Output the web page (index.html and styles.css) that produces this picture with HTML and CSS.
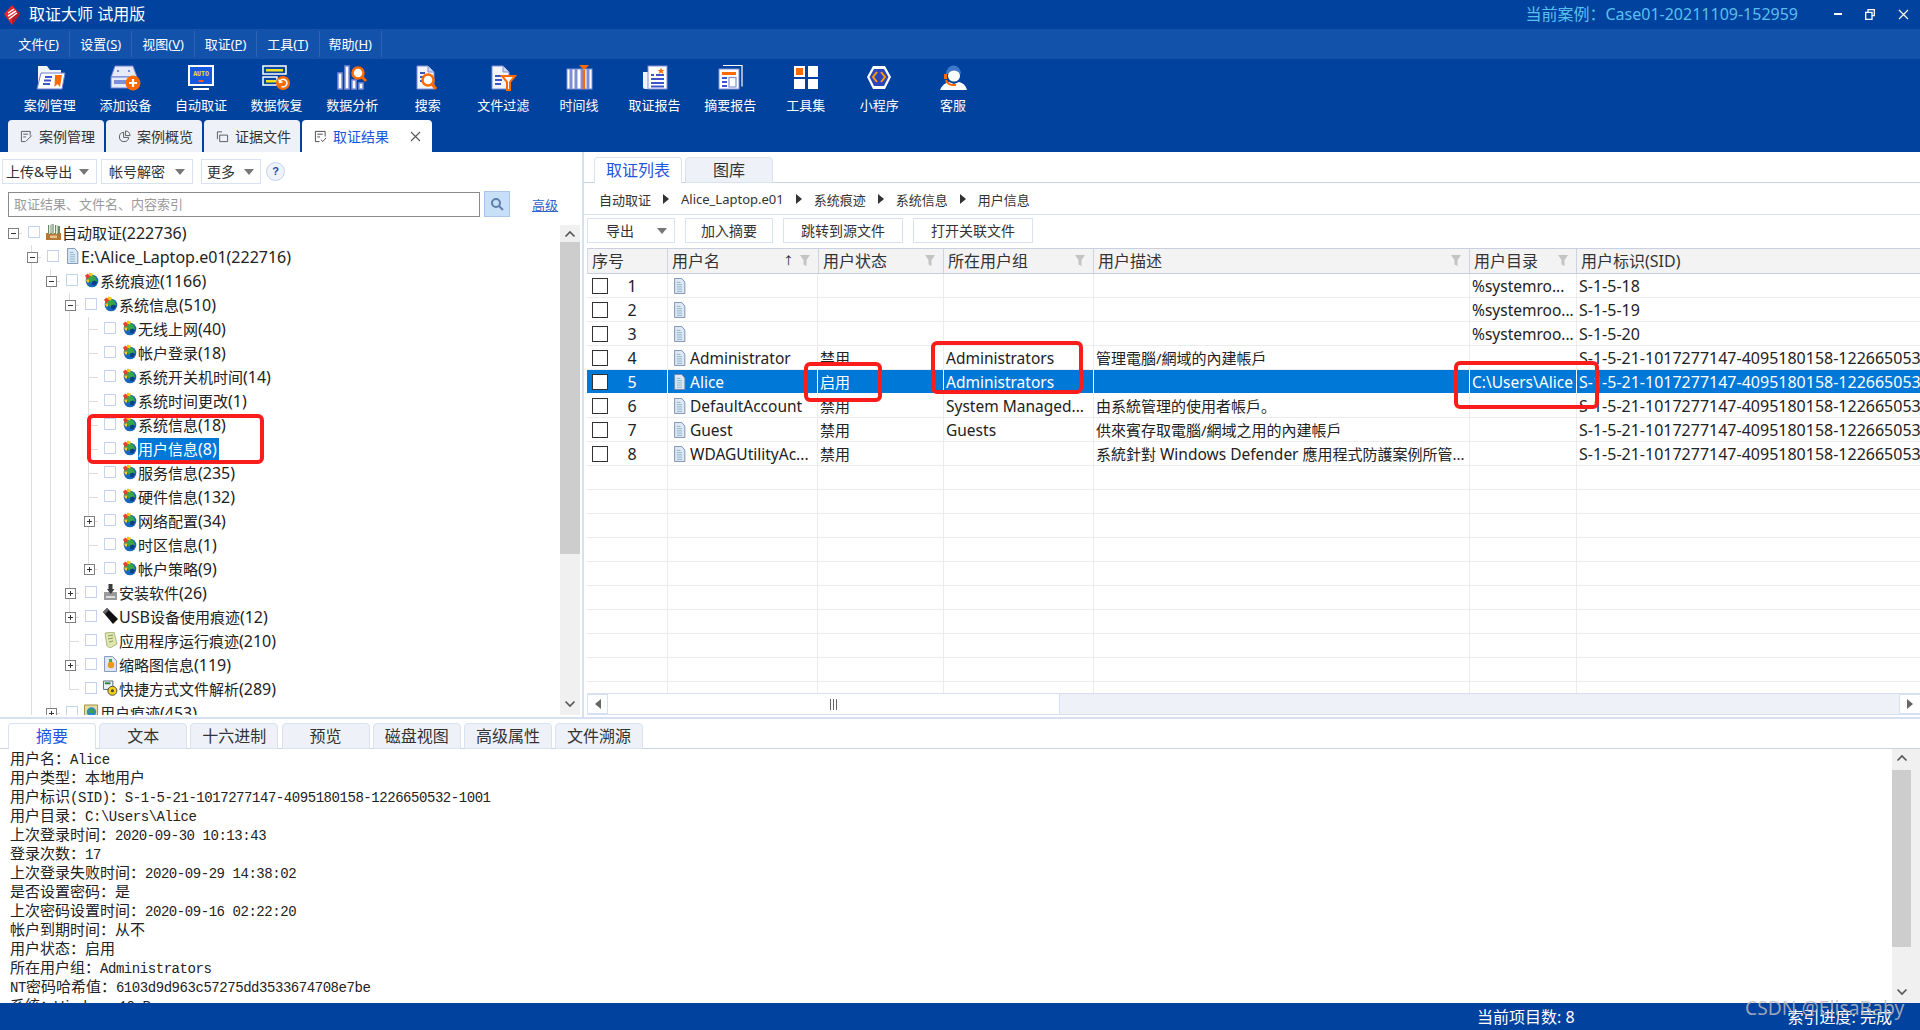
FILE: index.html
```html
<!DOCTYPE html>
<html lang="zh-CN">
<head>
<meta charset="utf-8">
<title>取证大师 试用版</title>
<link rel="stylesheet" href="styles.css">
</head>
<body>
<svg class="defs" aria-hidden="true">
  <symbol id="g-globe" viewBox="0 0 15 15">
    <circle cx="8" cy="8.500" r="6.300" fill="#1668bd"/>
    <path d="M3 5l3-3 5 2 2 4-3 3-3-1-3-2z" fill="#37a548"/>
    <path d="M8 9l3-1 2 2-2 3-3-1z" fill="#0d3f86"/>
    <path d="M1 3l3-2 2 3-3 3z" fill="#e8402a"/>
    <path d="M5 0l4 1-1 3-3-1z" fill="#f6c81e"/>
    <path d="M2 7l3 0 0 3-2 0z" fill="#f6c81e"/>
  </symbol>
  <symbol id="g-box" viewBox="0 0 15 16">
    <path d="M0 9h15v7H0z" fill="#b5763a"/>
    <path d="M2 1h2.500v9H2zM5.500 0H8v10H5.500zM9 1h2.500v9H9zM12 2h2v8h-2z" fill="#6a8a66"/>
    <path d="M3 1h1v9H3zM6.500 0h1v10h-1zM10 1h1v9h-1z" fill="#dfe8d8"/>
    <path d="M4 11.500h7V14H4z" fill="#e9c48a"/>
  </symbol>
  <symbol id="g-doc" viewBox="0 0 14 18">
    <path d="M1.500.5h8l3.500 4v13h-11.500z" fill="#dfe9f5" stroke="#6d88a8"/>
    <path d="M4 5h4M4 7.500h6M4 10h6M4 12.500h6M4 15h6" stroke="#7fb0c8"/>
  </symbol>
  <symbol id="g-inst" viewBox="0 0 15 16">
    <path d="M1 8h13v8H1z" fill="#9a9a9a"/>
    <path d="M5.500 0h4v5h2l-3.800 5L4 5h1.500z" fill="#3a3a3a"/>
    <path d="M3 12h9v2H3z" fill="#ddd"/>
  </symbol>
  <symbol id="g-usb" viewBox="0 0 15 16">
    <path d="M0 4l4-4 11 11-5 5z" fill="#111"/>
    <path d="M0 4l4-4 2 2-4 4z" fill="#666"/>
  </symbol>
  <symbol id="g-app" viewBox="0 0 15 16">
    <path d="M2 1l9-1 3 12-7 4-3-2z" fill="#dfe6b0" stroke="#9aa86a" stroke-width=".8"/>
    <path d="M5 4l5-1M5 7l5-1M6 10l4-1" stroke="#8a9a5a"/>
  </symbol>
  <symbol id="g-thumb" viewBox="0 0 15 16">
    <path d="M1.500.5h8l4 4v11h-12z" fill="#dfe6f6" stroke="#8b9bc0"/>
    <circle cx="8" cy="9" r="3.300" fill="#e89a1e"/>
    <path d="M6 3h3v3H6z" fill="#4aa84a"/>
  </symbol>
  <symbol id="g-link" viewBox="0 0 16 16">
    <path d="M.5.500h10v9H.5z" fill="#e8f0f8" stroke="#567"/>
    <path d="M2 3h6" stroke="#2a7a3a" stroke-width="2"/>
    <circle cx="10" cy="11" r="4.800" fill="#f2d21a" stroke="#444"/>
    <circle cx="10" cy="11" r="1.600" fill="#444"/>
  </symbol>
  <symbol id="g-user" viewBox="0 0 16 16">
    <path d="M.5.500h14v15H.5z" fill="#e8d9a0" stroke="#a08a40"/>
    <circle cx="8" cy="8" r="5" fill="#2a8ac8"/>
    <path d="M5 6l3-2 3 2v3H5z" fill="#3aa050"/>
  </symbol>
  <symbol id="g-funnel" viewBox="0 0 10 12">
    <path d="M0 0h10L6.500 5v6l-3-1.500V5z" fill="#c4c4c4"/>
  </symbol>
  <symbol id="g-mag" viewBox="0 0 14 14">
    <circle cx="6" cy="6" r="4" fill="none" stroke="#5d7fa8" stroke-width="2"/>
    <path d="M9 9l4 4" stroke="#5d7fa8" stroke-width="2"/>
  </symbol>
</svg>

<div class="app">
  <header class="head">
    <div class="titlebar">
      <svg class="logo" viewBox="0 0 16 20" width="16" height="20">
        <path d="M8 0l8 9-8 11L0 9z" fill="#e5262a"/>
        <path d="M8 20l8-11-3-3-5 7z" fill="#b81a20"/>
        <path d="M4 8l6-4M4 11l8-5M5 14l8-6" stroke="#fff" stroke-width="1.500" fill="none"/>
      </svg>
      <span class="apptitle">取证大师 试用版</span>
      <span class="case">当前案例：Case01-20211109-152959</span>
      <div class="winctl">
        <svg width="8" height="3" viewBox="0 0 8 3"><path d="M0 1h8" stroke="#fff" stroke-width="2"/></svg>
        <svg width="10" height="11" viewBox="0 0 10 11"><path d="M3 3V.7h6.300v6H7M.7 3.300h6.300v7H.7z" fill="none" stroke="#fff" stroke-width="1.300"/></svg>
        <svg width="11" height="11" viewBox="0 0 11 11"><path d="M1 1l9 9M10 1l-9 9" stroke="#fff" stroke-width="1.200"/></svg>
      </div>
    </div>
    <nav class="menubar">
      <span class="mi">文件(<u>F</u>)</span>
      <span class="mi">设置(<u>S</u>)</span>
      <span class="mi">视图(<u>V</u>)</span>
      <span class="mi">取证(<u>P</u>)</span>
      <span class="mi">工具(<u>T</u>)</span>
      <span class="mi">帮助(<u>H</u>)</span>
    </nav>
    <div class="toolbar">
      <div class="tool">
        <svg class="ticon" viewBox="0 0 32 26"><path d="M4 1h9l3 4h11v18H4z" fill="#f2f4fb"/><path d="M7 8h24l-3 16H3z" fill="#fff" stroke="#6f7fd0"/><path d="M11 12h7M10 15.500h7M9 19h7" stroke="#3d55c8" stroke-width="2"/><path d="M21 10h7l-2 12-2.500-3-3 3z" fill="#ff6a00"/></svg>
        <span class="tlabel">案例管理</span>
      </div>
      <div class="tool">
        <svg class="ticon" viewBox="0 0 32 26"><path d="M6 1h18l4 11H2z" fill="#e7eaf8" stroke="#6f7fd0"/><circle cx="9" cy="6" r="1" fill="#5a6bc8"/><circle cx="20" cy="6" r="1" fill="#5a6bc8"/><rect x="2" y="12" width="25" height="11" fill="#e7eaf8" stroke="#6f7fd0"/><rect x="5" y="15" width="13" height="4" fill="#7f8fd6"/><circle cx="24" cy="18" r="7.500" fill="#ff6a00"/><path d="M24 14v8M20 18h8" stroke="#fff" stroke-width="2.200"/></svg>
        <span class="tlabel">添加设备</span>
      </div>
      <div class="tool">
        <svg class="ticon" viewBox="0 0 32 26"><rect x="3" y="0" width="26" height="21" fill="#fff"/><rect x="5" y="2" width="22" height="17" fill="#1658e0"/><text class="autotxt" x="16" y="11" text-anchor="middle">AUTO</text><rect x="13.500" y="15" width="5" height="2" fill="#ff5a1a"/><path d="M8 24h16" stroke="#fff" stroke-width="2"/></svg>
        <span class="tlabel">自动取证</span>
      </div>
      <div class="tool">
        <svg class="ticon" viewBox="0 0 32 26"><rect x="2" y="1" width="23" height="8" fill="#0a46a5" stroke="#fff" stroke-width="1.500"/><rect x="5" y="4" width="17" height="2.500" fill="#f4e020"/><rect x="2" y="12" width="14" height="8" fill="#0a46a5" stroke="#fff" stroke-width="1.500"/><rect x="5" y="15" width="10" height="2.500" fill="#f4e020"/><circle cx="22" cy="18" r="7" fill="#ff6a00"/><path d="M18.500 17a3.800 3.800 0 1 1 2 4.500M18 14.500l.5 3 3-.8" fill="none" stroke="#fff" stroke-width="1.500"/></svg>
        <span class="tlabel">数据恢复</span>
      </div>
      <div class="tool">
        <svg class="ticon" viewBox="0 0 32 26"><g fill="#fff" stroke="#7f8fd6" stroke-width="1.500"><rect x="2" y="8" width="4" height="16"/><rect x="9" y="1" width="4" height="23"/><rect x="16" y="15" width="4" height="9"/><rect x="23" y="18" width="4" height="6"/></g><circle cx="22" cy="8" r="5.500" fill="#fff" stroke="#ff6a00" stroke-width="2.500"/><path d="M26 12l4 4" stroke="#ff6a00" stroke-width="3"/></svg>
        <span class="tlabel">数据分析</span>
      </div>
      <div class="tool">
        <svg class="ticon" viewBox="0 0 32 26"><path d="M5 1h11l6 6v17H5z" fill="#f4f5fb" stroke="#7f8fd6"/><path d="M16 1v6h6" fill="#cfd5ee" stroke="#7f8fd6"/><path d="M8 8h5M8 12h3M8 16h3" stroke="#3d55c8" stroke-width="2"/><circle cx="16" cy="15" r="5.500" fill="#fff" stroke="#ff6a00" stroke-width="2.500"/><path d="M20 19l4 5" stroke="#ff6a00" stroke-width="3"/></svg>
        <span class="tlabel">搜索</span>
      </div>
      <div class="tool">
        <svg class="ticon" viewBox="0 0 32 26"><path d="M5 1h11l6 6v17H5z" fill="#f4f5fb" stroke="#7f8fd6"/><path d="M16 1v6h6" fill="#cfd5ee" stroke="#7f8fd6"/><path d="M8 11h6M8 15h7M8 19h6" stroke="#3d55c8" stroke-width="2"/><path d="M15 11h13l-5 6v8h-3v-8z" fill="#fff" stroke="#ff6a00" stroke-width="2"/></svg>
        <span class="tlabel">文件过滤</span>
      </div>
      <div class="tool">
        <svg class="ticon" viewBox="0 0 32 26"><rect x="4" y="4" width="25" height="20" fill="#fff" stroke="#7f8fd6"/><path d="M8 4v20M13 4v20M19 4v20M25 4v20" stroke="#7f8fd6" stroke-width="3"/><path d="M21 5v19" stroke="#ff6a00" stroke-width="2.500"/><path d="M16 0h10l-5 5z" fill="#ff6a00"/></svg>
        <span class="tlabel">时间线</span>
      </div>
      <div class="tool">
        <svg class="ticon" viewBox="0 0 32 26"><path d="M4 7h6v17H6q-2 0-2-2z" fill="#f2f4fb"/><rect x="9" y="1" width="19" height="23" fill="#fff" stroke="#7f8fd6"/><path d="M12 10h3M17 10h8M12 14h13M12 18h13M12 21.500h13" stroke="#3d55c8" stroke-width="1.800"/><path d="M22 2.500l1 2.500h2.500l-2 1.600.8 2.400-2.300-1.500-2.300 1.500.8-2.400-2-1.600H21z" fill="#ff6a00"/></svg>
        <span class="tlabel">取证报告</span>
      </div>
      <div class="tool">
        <svg class="ticon" viewBox="0 0 32 26"><path d="M9 .5h19v21" fill="none" stroke="#fff" stroke-width="1.200"/><rect x="5" y="4" width="20" height="20" fill="#fff" stroke="#7f8fd6"/><rect x="8" y="7" width="14" height="3" fill="#ff6a00"/><path d="M8 13h5M8 17h5M8 21h5" stroke="#3d55c8" stroke-width="2"/><rect x="15" y="12.500" width="7" height="9.500" fill="#fff" stroke="#7f8fd6" stroke-width="1.200"/></svg>
        <span class="tlabel">摘要报告</span>
      </div>
      <div class="tool">
        <svg class="ticon" viewBox="0 0 32 26"><rect x="4" y="1" width="11" height="11" fill="#fff"/><rect x="6" y="3" width="7" height="7" fill="#ff6a00"/><rect x="18" y="1" width="10" height="11" fill="#fff"/><rect x="4" y="14" width="11" height="10" fill="#fff"/><rect x="18" y="14" width="10" height="10" fill="#fff"/></svg>
        <span class="tlabel">工具集</span>
      </div>
      <div class="tool">
        <svg class="ticon" viewBox="0 0 32 26"><path d="M10 1h12l6 11-6 12H10L4 12z" fill="#fff"/><path d="M11 4h10l4.500 8L21 21H11L6.500 12z" fill="#2b45b8"/><path d="M14 7l-4 5 4 5M18 7l4 5-4 5" fill="none" stroke="#ff9a00" stroke-width="2"/></svg>
        <span class="tlabel">小程序</span>
      </div>
      <div class="tool">
        <svg class="ticon" viewBox="0 0 32 26"><path d="M9 9a7.500 8.500 0 0 1 15 0z" fill="#3f78c8"/><ellipse cx="17" cy="11" rx="6" ry="5.500" fill="#fff"/><path d="M3 25q3-7 9-8l5 2 5-2q6 1 8 8z" fill="#fff"/><path d="M7 9h3v5H7z" fill="#ff6a00"/><path d="M9 15q1 4 6 5h4" fill="none" stroke="#ff6a00" stroke-width="2"/></svg>
        <span class="tlabel">客服</span>
      </div>
    </div>
    <div class="doctabs">
      <div class="dtab">
        <svg class="dico" viewBox="0 0 14 14"><path d="M11 6V1.500H1.500v11H6M3.500 4.500h5M3.500 7.500h3M6.500 12l6-6" fill="none" stroke="#555"/></svg>案例管理
      </div>
      <div class="dtab">
        <svg class="dico" viewBox="0 0 14 14"><path d="M6 2.500a5 5 0 1 0 5.500 5.500H6zM8 1a5 5 0 0 1 5 5H8z" fill="none" stroke="#555"/></svg>案例概览
      </div>
      <div class="dtab">
        <svg class="dico" viewBox="0 0 14 14"><path d="M1.500 10V2h5M4 5.500h8.500v7H4z" fill="none" stroke="#555"/></svg>证据文件
      </div>
      <div class="dtab on">
        <svg class="dico" viewBox="0 0 14 14"><path d="M12 7V1.500H1.500v11H6M3.500 4.500h6M3.500 7.500h3M7.500 10.500l2 2 3.500-4" fill="none" stroke="#444"/></svg><span class="dname">取证结果</span>
        <svg class="dclose" viewBox="0 0 11 11" width="11" height="11"><path d="M1 1l9 9M10 1l-9 9" stroke="#555" stroke-width="1.100"/></svg>
      </div>
    </div>
  </header>

  <main class="main">
    <section class="left">
      <div class="lbar">
        <div class="btn b1">上传&amp;导出<i class="caret"></i></div>
        <div class="btn b2">帐号解密<i class="caret"></i></div>
        <div class="btn b3">更多<i class="caret"></i></div>
        <div class="help">?</div>
      </div>
      <div class="searchrow">
        <div class="searchbox">取证结果、文件名、内容索引</div>
        <div class="searchbtn"><svg width="14" height="14"><use href="#g-mag"/></svg></div>
        <a class="adv">高级</a>
      </div>
      <div class="treewrap">
        <div class="tree">
          <div class="tr l0"><span class="ex minus"></span><span class="cb"></span><svg class="ti"><use href="#g-box"/></svg><span class="tt">自动取证<span class="n">(222736)</span></span></div>
          <div class="tr l1"><span class="ex minus"></span><span class="cb"></span><svg class="ti"><use href="#g-doc"/></svg><span class="tt"><span class="n">E:\Alice_Laptop.e01(222716)</span></span></div>
          <div class="tr l2"><span class="ex minus"></span><span class="cb"></span><svg class="ti"><use href="#g-globe"/></svg><span class="tt">系统痕迹<span class="n">(1166)</span></span></div>
          <div class="tr l3"><span class="ex minus"></span><span class="cb"></span><svg class="ti"><use href="#g-globe"/></svg><span class="tt">系统信息<span class="n">(510)</span></span></div>
          <div class="tr l4"><span class="ex leaf"></span><span class="cb"></span><svg class="ti"><use href="#g-globe"/></svg><span class="tt">无线上网<span class="n">(40)</span></span></div>
          <div class="tr l4"><span class="ex leaf"></span><span class="cb"></span><svg class="ti"><use href="#g-globe"/></svg><span class="tt">帐户登录<span class="n">(18)</span></span></div>
          <div class="tr l4"><span class="ex leaf"></span><span class="cb"></span><svg class="ti"><use href="#g-globe"/></svg><span class="tt">系统开关机时间<span class="n">(14)</span></span></div>
          <div class="tr l4"><span class="ex leaf"></span><span class="cb"></span><svg class="ti"><use href="#g-globe"/></svg><span class="tt">系统时间更改<span class="n">(1)</span></span></div>
          <div class="tr l4"><span class="ex leaf"></span><span class="cb"></span><svg class="ti"><use href="#g-globe"/></svg><span class="tt">系统信息<span class="n">(18)</span></span></div>
          <div class="tr l4"><span class="ex leaf"></span><span class="cb"></span><svg class="ti"><use href="#g-globe"/></svg><span class="tt sel">用户信息<span class="n">(8)</span></span></div>
          <div class="tr l4"><span class="ex leaf"></span><span class="cb"></span><svg class="ti"><use href="#g-globe"/></svg><span class="tt">服务信息<span class="n">(235)</span></span></div>
          <div class="tr l4"><span class="ex leaf"></span><span class="cb"></span><svg class="ti"><use href="#g-globe"/></svg><span class="tt">硬件信息<span class="n">(132)</span></span></div>
          <div class="tr l4"><span class="ex plus"></span><span class="cb"></span><svg class="ti"><use href="#g-globe"/></svg><span class="tt">网络配置<span class="n">(34)</span></span></div>
          <div class="tr l4"><span class="ex leaf"></span><span class="cb"></span><svg class="ti"><use href="#g-globe"/></svg><span class="tt">时区信息<span class="n">(1)</span></span></div>
          <div class="tr l4"><span class="ex plus"></span><span class="cb"></span><svg class="ti"><use href="#g-globe"/></svg><span class="tt">帐户策略<span class="n">(9)</span></span></div>
          <div class="tr l3"><span class="ex plus"></span><span class="cb"></span><svg class="ti"><use href="#g-inst"/></svg><span class="tt">安装软件<span class="n">(26)</span></span></div>
          <div class="tr l3"><span class="ex plus"></span><span class="cb"></span><svg class="ti"><use href="#g-usb"/></svg><span class="tt"><span class="n">USB</span>设备使用痕迹<span class="n">(12)</span></span></div>
          <div class="tr l3"><span class="ex leaf"></span><span class="cb"></span><svg class="ti"><use href="#g-app"/></svg><span class="tt">应用程序运行痕迹<span class="n">(210)</span></span></div>
          <div class="tr l3"><span class="ex plus"></span><span class="cb"></span><svg class="ti"><use href="#g-thumb"/></svg><span class="tt">缩略图信息<span class="n">(119)</span></span></div>
          <div class="tr l3"><span class="ex leaf"></span><span class="cb"></span><svg class="ti"><use href="#g-link"/></svg><span class="tt">快捷方式文件解析<span class="n">(289)</span></span></div>
          <div class="tr l2"><span class="ex plus"></span><span class="cb"></span><svg class="ti"><use href="#g-user"/></svg><span class="tt">用户痕迹<span class="n">(453)</span></span></div>
        </div>
        <div class="vscroll vs-tree">
          <svg class="arrow" width="12" height="8" viewBox="0 0 12 8"><path d="M1.500 6.500L6 2l4.500 4.500" fill="none" stroke="#555" stroke-width="1.600"/></svg>
          <div class="thumb th-tree"></div>
          <div class="spacer"></div>
          <svg class="arrow" width="12" height="8" viewBox="0 0 12 8"><path d="M1.500 1.500L6 6l4.500-4.500" fill="none" stroke="#555" stroke-width="1.600"/></svg>
        </div>
      </div>
    </section>

    <div class="splitter"></div>

    <section class="right">
      <div class="rtabs">
        <div class="rtab on">取证列表</div>
        <div class="rtab">图库</div>
      </div>
      <div class="crumbs">
        <span>自动取证</span><i class="tri"></i>
        <span>Alice_Laptop.e01</span><i class="tri"></i>
        <span>系统痕迹</span><i class="tri"></i>
        <span>系统信息</span><i class="tri"></i>
        <span>用户信息</span>
      </div>
      <div class="rbar">
        <div class="btn r1">导出<i class="caret"></i></div>
        <div class="btn r2">加入摘要</div>
        <div class="btn r3">跳转到源文件</div>
        <div class="btn r3">打开关联文件</div>
      </div>
      <div class="table">
        <div class="thead">
          <div class="th">序号</div>
          <div class="th">用户名<span class="hicons"><span class="sort">↑</span><svg class="fl"><use href="#g-funnel"/></svg></span></div>
          <div class="th">用户状态<span class="hicons"><svg class="fl"><use href="#g-funnel"/></svg></span></div>
          <div class="th">所在用户组<span class="hicons"><svg class="fl"><use href="#g-funnel"/></svg></span></div>
          <div class="th">用户描述<span class="hicons"><svg class="fl"><use href="#g-funnel"/></svg></span></div>
          <div class="th">用户目录<span class="hicons"><svg class="fl"><use href="#g-funnel"/></svg></span></div>
          <div class="th">用户标识<span class="n">(SID)</span></div>
        </div>
        <div class="tbody">
          <div class="row"><div class="c c0"><i class="chk"></i><span class="no">1</span></div><div class="c c1"><svg class="fi"><use href="#g-doc"/></svg></div><div class="c"></div><div class="c"></div><div class="c"></div><div class="c la">%systemro...</div><div class="c sid">S-1-5-18</div></div>
          <div class="row"><div class="c c0"><i class="chk"></i><span class="no">2</span></div><div class="c c1"><svg class="fi"><use href="#g-doc"/></svg></div><div class="c"></div><div class="c"></div><div class="c"></div><div class="c la">%systemroo...</div><div class="c sid">S-1-5-19</div></div>
          <div class="row"><div class="c c0"><i class="chk"></i><span class="no">3</span></div><div class="c c1"><svg class="fi"><use href="#g-doc"/></svg></div><div class="c"></div><div class="c"></div><div class="c"></div><div class="c la">%systemroo...</div><div class="c sid">S-1-5-20</div></div>
          <div class="row"><div class="c c0"><i class="chk"></i><span class="no">4</span></div><div class="c c1"><svg class="fi"><use href="#g-doc"/></svg><span class="nm">Administrator</span></div><div class="c">禁用</div><div class="c la">Administrators</div><div class="c">管理電腦/網域的內建帳戶</div><div class="c"></div><div class="c sid">S-1-5-21-1017277147-4095180158-1226650532-500</div></div>
          <div class="row act"><div class="c c0"><i class="chk"></i><span class="no">5</span></div><div class="c c1"><svg class="fi"><use href="#g-doc"/></svg><span class="nm">Alice</span></div><div class="c">启用</div><div class="c la">Administrators</div><div class="c"></div><div class="c la">C:\Users\Alice</div><div class="c sid">S-1-5-21-1017277147-4095180158-1226650532-1001</div></div>
          <div class="row"><div class="c c0"><i class="chk"></i><span class="no">6</span></div><div class="c c1"><svg class="fi"><use href="#g-doc"/></svg><span class="nm">DefaultAccount</span></div><div class="c">禁用</div><div class="c la">System Managed...</div><div class="c">由系統管理的使用者帳戶。</div><div class="c"></div><div class="c sid">S-1-5-21-1017277147-4095180158-1226650532-503</div></div>
          <div class="row"><div class="c c0"><i class="chk"></i><span class="no">7</span></div><div class="c c1"><svg class="fi"><use href="#g-doc"/></svg><span class="nm">Guest</span></div><div class="c">禁用</div><div class="c la">Guests</div><div class="c">供來賓存取電腦/網域之用的內建帳戶</div><div class="c"></div><div class="c sid">S-1-5-21-1017277147-4095180158-1226650532-501</div></div>
          <div class="row"><div class="c c0"><i class="chk"></i><span class="no">8</span></div><div class="c c1"><svg class="fi"><use href="#g-doc"/></svg><span class="nm">WDAGUtilityAc...</span></div><div class="c">禁用</div><div class="c"></div><div class="c">系統針對 <span class="la">Windows Defender</span> 應用程式防護案例所管...</div><div class="c"></div><div class="c sid">S-1-5-21-1017277147-4095180158-1226650532-504</div></div>
          <div class="row"></div><div class="row"></div><div class="row"></div><div class="row"></div><div class="row"></div>
          <div class="row"></div><div class="row"></div><div class="row"></div><div class="row"></div><div class="row"></div>
        </div>
      </div>
      <div class="hscroll">
        <div class="hbtn"><i class="tri left-tri"></i></div>
        <div class="hthumb"><span class="grip"></span></div>
        <div class="spacer"></div>
        <div class="hbtn hbtn-r"><i class="tri"></i></div>
      </div>
    </section>
  </main>

  <section class="bottom">
    <div class="btabs">
      <div class="btab on">摘要</div>
      <div class="btab">文本</div>
      <div class="btab">十六进制</div>
      <div class="btab">预览</div>
      <div class="btab">磁盘视图</div>
      <div class="btab">高级属性</div>
      <div class="btab">文件溯源</div>
    </div>
    <div class="bbody">
      <div class="detail">
        <div class="ln">用户名：<span class="m">Alice</span></div>
        <div class="ln">用户类型：本地用户</div>
        <div class="ln">用户标识<span class="m">(SID)</span>：<span class="m">S-1-5-21-1017277147-4095180158-1226650532-1001</span></div>
        <div class="ln">用户目录：<span class="m">C:\Users\Alice</span></div>
        <div class="ln">上次登录时间：<span class="m">2020-09-30 10:13:43</span></div>
        <div class="ln">登录次数：<span class="m">17</span></div>
        <div class="ln">上次登录失败时间：<span class="m">2020-09-29 14:38:02</span></div>
        <div class="ln">是否设置密码：是</div>
        <div class="ln">上次密码设置时间：<span class="m">2020-09-16 02:22:20</span></div>
        <div class="ln">帐户到期时间：从不</div>
        <div class="ln">用户状态：启用</div>
        <div class="ln">所在用户组：<span class="m">Administrators</span></div>
        <div class="ln"><span class="m">NT</span>密码哈希值：<span class="m">6103d9d963c57275dd3533674708e7be</span></div>
        <div class="ln">系统：<span class="m">Windows 10 Pro</span></div>
      </div>
      <div class="vscroll vs-bottom">
        <svg class="arrow" width="12" height="8" viewBox="0 0 12 8"><path d="M1.500 6.500L6 2l4.500 4.500" fill="none" stroke="#555" stroke-width="1.600"/></svg>
        <div class="thumb th-bottom"></div>
        <div class="spacer"></div>
        <svg class="arrow" width="12" height="8" viewBox="0 0 12 8"><path d="M1.500 1.500L6 6l4.500-4.500" fill="none" stroke="#555" stroke-width="1.600"/></svg>
      </div>
    </div>
  </section>

  <footer class="status">
    <span class="st1">当前项目数: 8</span>
    <span class="st2">索引进度: 完成</span>
  </footer>
</div>

<div class="ann ann1"></div>
<div class="ann ann2"></div>
<div class="ann ann3"></div>
<div class="ann ann4"></div>
<div class="watermark">CSDN @ElisaBaby</div>
</body>
</html>
```
FILE: styles.css
```css
* { box-sizing: border-box; }
html, body { margin: 0; height: 1030px; overflow: hidden; background: #fff; }
body { position: relative; font-family: "Noto Sans", "Noto Sans CJK SC", sans-serif; color: #222; font-size: 14px; }
.defs { display: none; }
.app { display: flex; flex-direction: column; width: 1920px; height: 1030px; overflow: hidden; }
i { font-style: normal; }

/* header */
.head { background: #00429e; color: #fff; flex: none; }
.titlebar { height: 29px; display: flex; align-items: center; padding-left: 4px; }
.logo { flex: none; }
.apptitle { margin-left: 9px; font-size: 16px; line-height: 29px; }
.case { margin-left: auto; font-size: 16px; color: #58c0ee; line-height: 29px; }
.winctl { display: flex; align-items: center; gap: 23px; padding-right: 11px; width: 122px; justify-content: flex-end; }
.menubar { height: 30px; background: #1252ab; display: flex; }
.mi { width: 62.400px; font-size: 13px; text-align: center; border-right: 1px solid #2a64b6; margin: 2px 0; line-height: 26px; }
.mi:first-child { width: 70px; padding-left: 8px; }
.toolbar { height: 61px; display: flex; padding: 6px 0 0 12px; }
.tool { width: 75.600px; display: flex; flex-direction: column; align-items: center; }
.tool:nth-child(n+12) { margin-left: -2px; }
.ticon { width: 32px; height: 26px; flex: none; }
.tlabel { font-size: 13px; line-height: 16px; margin-top: 6px; white-space: nowrap; }
.autotxt { font: 700 6.500px "Liberation Mono", monospace; fill: #f4e020; }
.doctabs { height: 32px; display: flex; gap: 2px; padding-left: 8px; }
.dtab { width: 96px; height: 32px; background: #eef2f8; color: #333; border-radius: 4px 4px 0 0; display: flex; align-items: center; padding-left: 12px; font-size: 14px; }
.dtab.on { width: 130px; background: #fff; }
.dico { width: 13px; height: 13px; margin-right: 6px; flex: none; }
.dname { color: #2255dd; }
.dclose { margin-left: auto; margin-right: 11px; }

/* main */
.main { flex: none; height: 565px; display: flex; }
.left { width: 582px; flex: none; display: flex; flex-direction: column; }
.lbar { display: flex; align-items: center; height: 25px; margin: 7px 0 0 2px; }
.btn { height: 25px; border: 1px solid #d8e2f1; background: #fff; font-size: 14px; line-height: 23px; color: #333; display: flex; align-items: center; justify-content: space-between; white-space: nowrap; }
.b1 { width: 95px; padding: 0 7px 0 3px; }
.b2 { width: 92px; margin-left: 4px; padding: 0 7px 0 7px; }
.b3 { width: 60px; margin-left: 8px; padding: 0 6px 0 5px; }
.caret { width: 0; height: 0; border: 5px solid transparent; border-top: 6px solid #777; border-bottom: 0; flex: none; }
.help { width: 19px; height: 19px; margin-left: 5px; border: 1px solid #c5d3e8; border-radius: 50%; background: #eef3fa; color: #1d4f9c; font: 700 11px/17px "Liberation Sans", sans-serif; text-align: center; }
.searchrow { display: flex; align-items: center; height: 26px; margin-top: 7px; padding-left: 8px; }
.searchbox { width: 472px; height: 25px; border: 1px solid #8a8a8a; color: #9a9a9a; font-size: 13px; line-height: 23px; padding-left: 5px; }
.searchbtn { width: 26px; height: 26px; margin-left: 4px; background: #c8dff8; border: 1px solid #a9c6ea; display: flex; align-items: center; justify-content: center; }
.adv { margin-left: 22px; font-size: 13px; color: #2f62c8; text-decoration: underline; }
.treewrap { flex: 1; min-height: 0; display: flex; margin-top: 4px; }
.tree {
  width: 560px; flex: none; overflow: hidden; height: 494px;
  background:
    linear-gradient(#dcdcdc, #dcdcdc) 31px 24px / 1px 100% no-repeat,
    linear-gradient(#dcdcdc, #dcdcdc) 50px 48px / 1px 100% no-repeat,
    linear-gradient(#dcdcdc, #dcdcdc) 69px 72px / 1px 396px no-repeat,
    linear-gradient(#dcdcdc, #dcdcdc) 88px 96px / 1px 252px no-repeat;
}
.tr { height: 24px; display: flex; align-items: center; white-space: nowrap; }
.l0 { padding-left: 8px; }
.l1 { padding-left: 27px; }
.l2 { padding-left: 46px; }
.l3 { padding-left: 65px; }
.l4 { padding-left: 84px; }
.ex { width: 14px; height: 24px; flex: none; display: flex; align-items: center; background: linear-gradient(#dcdcdc, #dcdcdc) 4px center / 10px 1px no-repeat; }
.ex::before { content: ""; width: 9px; height: 9px; border: 1px solid #808080; background: linear-gradient(#333, #333) center / 5px 1px no-repeat, #fff; }
.ex.plus::before { background: linear-gradient(#333, #333) center / 5px 1px no-repeat, linear-gradient(#333, #333) center / 1px 5px no-repeat, #fff; }
.ex.leaf::before { display: none; }
.cb { width: 12px; height: 12px; margin-left: 6px; border: 1px solid #c3d3ef; background: #fff; flex: none; margin-top: -2px; }
.ti { width: 15px; height: 16px; margin-left: 6px; flex: none; margin-top: -2px; }
.tt { margin-left: 1px; font-size: 15px; line-height: 23px; height: 23px; padding-right: 2px; }
.tt.sel { background: #0078d7; color: #fff; }
.n { font-size: 16px; }
.vscroll { display: flex; flex-direction: column; align-items: center; background: #f0f0f0; flex: none; }
.vs-tree { width: 20px; height: 490px; margin-top: 4px; }
.arrow { flex: none; margin: 5px 0 4px; }
.arrow:last-child { margin: 0 0 7px; }
.thumb { background: #cdcdcd; flex: none; width: 100%; }
.th-tree { height: 312px; }
.spacer { flex: 1; }
.splitter { width: 2px; background: #d6e0f0; flex: none; }
.right { flex: 1; min-width: 0; padding-left: 3px; display: flex; flex-direction: column; }
.rtabs { display: flex; gap: 3px; margin-top: 5px; height: 26px; margin-left: -3px; padding-left: 10px; border-bottom: 1px solid #ccd2e4; }
.rtab { width: 88px; height: 26px; background: #eef2f8; border: 1px solid #d8e2f1; border-radius: 4px 4px 0 0; font-size: 16px; line-height: 24px; text-align: center; color: #333; }
.rtab.on { background: #fff; color: #2255dd; border-bottom: 0; }
.crumbs { height: 32px; margin-left: -3px; padding: 1px 0 0 15px; display: flex; align-items: center; gap: 12px; font-size: 13px; color: #333; border-bottom: 1px solid #dde3ef; }
.tri { width: 0; height: 0; border: 5px solid transparent; border-left: 6px solid #333; border-right: 0; flex: none; }
.rbar { display: flex; gap: 10px; height: 25px; margin-top: 3px; }
.r1 { width: 88px; padding: 0 7px 0 18px; }
.r2 { width: 88px; justify-content: center; }
.r3 { width: 120px; justify-content: center; }
.table { margin-top: 5px; flex: 1; min-height: 0; overflow: hidden; }
.thead { height: 26px; background: #f3f3f3; border-top: 1px solid #c9cfdf; border-bottom: 1px solid #c9cfdf; border-left: 1px solid #d8dce6; display: grid; grid-template-columns: 80px 151px 125px 150px 376px 107px 1fr; }
.th { font-size: 16px; line-height: 24px; padding-left: 4px; border-right: 1px solid #cfd3de; display: flex; color: #333; white-space: nowrap; }
.th:last-child { border-right: 0; }
.hicons { margin-left: auto; display: flex; align-items: flex-start; padding: 6px 8px 0 0; gap: 6px; }
.fl { width: 10px; height: 12px; }
.sort { font-size: 11px; line-height: 12px; color: #222; }
.tbody {
  height: 420px; overflow: hidden;
  background:
    linear-gradient(#ececec, #ececec) 80px 0 / 1px 100% no-repeat,
    linear-gradient(#ececec, #ececec) 230px 0 / 1px 100% no-repeat,
    linear-gradient(#ececec, #ececec) 356px 0 / 1px 100% no-repeat,
    linear-gradient(#ececec, #ececec) 506px 0 / 1px 100% no-repeat,
    linear-gradient(#ececec, #ececec) 882px 0 / 1px 100% no-repeat,
    linear-gradient(#ececec, #ececec) 989px 0 / 1px 100% no-repeat;
}
.row { height: 24px; border-bottom: 1px solid #ececec; display: grid; grid-template-columns: 81px 150px 126px 150px 376px 107px 1fr; }
.row.act {
  color: #fff; border-bottom-color: #fff;
  background:
    linear-gradient(#fff, #fff) 80px 0 / 1px 100% no-repeat,
    linear-gradient(#fff, #fff) 230px 0 / 1px 100% no-repeat,
    linear-gradient(#fff, #fff) 356px 0 / 1px 100% no-repeat,
    linear-gradient(#fff, #fff) 506px 0 / 1px 100% no-repeat,
    linear-gradient(#fff, #fff) 882px 0 / 1px 100% no-repeat,
    linear-gradient(#fff, #fff) 989px 0 / 1px 100% no-repeat,
    #0078d7;
}
.c { font-size: 15px; line-height: 23px; padding: 1px 0 0 2px; white-space: nowrap; overflow: hidden; display: block; }
.la { font-size: 15.500px; }
.sid { font-size: 16px; }
.c0 { display: flex; align-items: center; padding: 0 0 0 5px; }
.chk { width: 16px; height: 16px; border: 1.500px solid #333; background: #fff; flex: none; }
.no { margin: 2px 0 0 19px; width: 10px; font-size: 16px; text-align: center; }
.c1 { display: flex; align-items: center; padding: 0 0 0 5px; }
.fi { width: 13px; height: 16px; flex: none; margin-right: 4px; }
.nm { font-size: 15.500px; margin-top: 2px; }
.hscroll { height: 22px; border-top: 1px solid #d6e0f0; border-bottom: 1px solid #d6e0f0; background: #eef2f8; display: flex; margin-bottom: 2px; flex: none; }
.hbtn { width: 21px; background: #fff; border: 1px solid #d6e0f0; display: flex; align-items: center; justify-content: center; flex: none; }
.hbtn-r { border-right: 0; }
.left-tri { transform: rotate(180deg); }
.hbtn .tri { border-left-color: #666; }
.hthumb { width: 452px; background: #fff; border-right: 1px solid #d6e0f0; display: flex; align-items: center; justify-content: center; flex: none; }
.grip { width: 7px; height: 11px; background: repeating-linear-gradient(90deg, #666 0 1px, #fff 1px 3px); }

/* bottom */
.bottom { flex: none; height: 286px; border-top: 2px solid #d6e0f0; display: flex; flex-direction: column; }
.btabs { flex: none; height: 30px; padding: 4px 0 0 8px; display: flex; gap: 3.200px; border-bottom: 1px solid #ccd2e4; }
.btab { width: 88px; height: 26px; background: #eef2f8; border: 1px solid #d8e2f1; border-radius: 4px 4px 0 0; font-size: 16px; line-height: 24px; text-align: center; color: #333; }
.btab.on { background: #fff; color: #2255dd; border-bottom: 0; }
.bbody { flex: 1; min-height: 0; display: flex; }
.detail { flex: 1; min-width: 0; padding-left: 10px; margin-top: -1px; font-size: 15px; color: #222; overflow: hidden; white-space: nowrap; font-family: "Noto Sans CJK SC", sans-serif; }
.ln { height: 19px; line-height: 19px; }
.m { font: 14px/19px "Liberation Mono", monospace; letter-spacing: -.45px; }
.vs-bottom { width: 28px; padding-right: 9px; }
.th-bottom { height: 177px; margin-top: 4px; }
.status { flex: none; height: 27px; background: #00429e; color: #fff; font-size: 16px; line-height: 28px; display: flex; }
.st1 { margin-left: 1477px; }
.st2 { margin-left: 213px; }

/* annotations drawn over the screenshot */
.ann { position: absolute; border: 4px solid #fb1c1c; border-radius: 6px; pointer-events: none; }
.ann1 { left: 87px; top: 414px; width: 177px; height: 50px; }
.ann2 { left: 804px; top: 362px; width: 78px; height: 40px; }
.ann3 { left: 931px; top: 341px; width: 152px; height: 53px; }
.ann4 { left: 1454px; top: 361px; width: 145px; height: 48px; }
.watermark { position: absolute; left: 1745px; top: 994px; font-size: 19.300px; line-height: 28px; color: rgba(190, 190, 190, .82); white-space: nowrap; }
```
